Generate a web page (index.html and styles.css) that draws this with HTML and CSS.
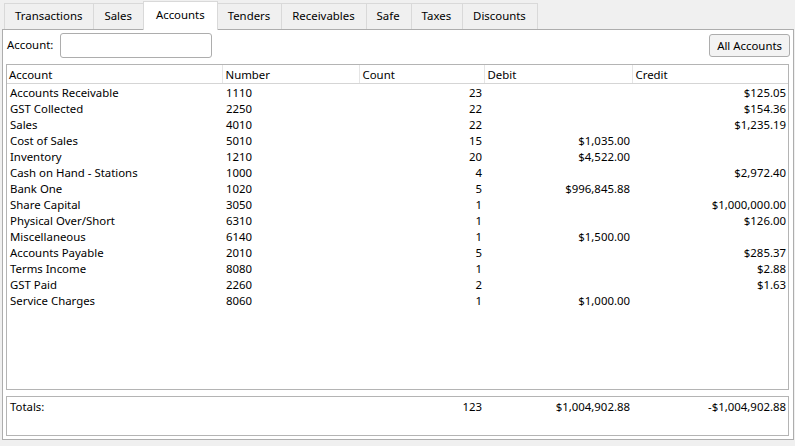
FILE: index.html
```html
<!DOCTYPE html>
<html lang="en">
<head>
<meta charset="UTF-8">
<title>Accounts</title>
<link rel="stylesheet" href="styles.css">
</head>
<body>
	<div class="tabs">
		<div class="tab">Transactions</div>
		<div class="tab">Sales</div>
		<div class="tab active">Accounts</div>
		<div class="tab">Tenders</div>
		<div class="tab">Receivables</div>
		<div class="tab">Safe</div>
		<div class="tab">Taxes</div>
		<div class="tab">Discounts</div>
	</div>

	<div class="panel">
		<div class="toolbar">
			<label class="lbl">Account:</label>
			<div class="field"></div>
			<div class="spacer"></div>
			<div class="btn">All Accounts</div>
		</div>

		<div class="grid">
			<table>
				<colgroup>
					<col class="c1"><col class="c2"><col class="c3"><col class="c4"><col>
				</colgroup>
				<thead>
					<tr><th>Account</th><th>Number</th><th>Count</th><th>Debit</th><th>Credit</th></tr>
				</thead>
				<tbody>
					<tr><td>Accounts Receivable</td><td>1110</td><td class="num">23</td><td class="num"></td><td class="num">$125.05</td></tr>
					<tr><td>GST Collected</td><td>2250</td><td class="num">22</td><td class="num"></td><td class="num">$154.36</td></tr>
					<tr><td>Sales</td><td>4010</td><td class="num">22</td><td class="num"></td><td class="num">$1,235.19</td></tr>
					<tr><td>Cost of Sales</td><td>5010</td><td class="num">15</td><td class="num">$1,035.00</td><td class="num"></td></tr>
					<tr><td>Inventory</td><td>1210</td><td class="num">20</td><td class="num">$4,522.00</td><td class="num"></td></tr>
					<tr><td>Cash on Hand - Stations</td><td>1000</td><td class="num">4</td><td class="num"></td><td class="num">$2,972.40</td></tr>
					<tr><td>Bank One</td><td>1020</td><td class="num">5</td><td class="num">$996,845.88</td><td class="num"></td></tr>
					<tr><td>Share Capital</td><td>3050</td><td class="num">1</td><td class="num"></td><td class="num">$1,000,000.00</td></tr>
					<tr><td>Physical Over/Short</td><td>6310</td><td class="num">1</td><td class="num"></td><td class="num">$126.00</td></tr>
					<tr><td>Miscellaneous</td><td>6140</td><td class="num">1</td><td class="num">$1,500.00</td><td class="num"></td></tr>
					<tr><td>Accounts Payable</td><td>2010</td><td class="num">5</td><td class="num"></td><td class="num">$285.37</td></tr>
					<tr><td>Terms Income</td><td>8080</td><td class="num">1</td><td class="num"></td><td class="num">$2.88</td></tr>
					<tr><td>GST Paid</td><td>2260</td><td class="num">2</td><td class="num"></td><td class="num">$1.63</td></tr>
					<tr><td>Service Charges</td><td>8060</td><td class="num">1</td><td class="num">$1,000.00</td><td class="num"></td></tr>
				</tbody>
			</table>
		</div>

		<div class="totals">
			<table>
				<colgroup>
					<col class="c1"><col class="c2"><col class="c3"><col class="c4"><col>
				</colgroup>
				<tr><td>Totals:</td><td></td><td class="num">123</td><td class="num">$1,004,902.88</td><td class="num">-$1,004,902.88</td></tr>
			</table>
		</div>
	</div>
</body>
</html>
```

FILE: styles.css
```css
body {
	margin: 0;
	background: #f0f0f0;
	font-family: "Noto Sans", "Open Sans", sans-serif;
	font-size: 11.4px;
	color: #000;
	height: 446px;
	overflow: hidden;
}

/* tab strip */
.tabs {
	display: flex;
	align-items: flex-end;
	height: 29px;
	padding-left: 4px;
}
.tab {
	height: 25px;
	line-height: 24px;
	padding: 0 11px 0 10px;
	min-width: 22px;
	text-align: center;
	border: 1px solid #d9d9d9;
	border-bottom: none;
	margin-right: -1px;
	background: #f0f0f0;
}
.tab.active {
	height: 28px;
	line-height: 25px;
	padding: 0 12px;
	margin: 0 -1px -1px 0;
	background: #fff;
	position: relative;
	z-index: 2;
}

/* main panel */
.panel {
	margin: 0 1px 0 2px;
	height: 411px;
	border: 1px solid #adadad;
	background: #fff;
	box-sizing: border-box;
	padding: 3px 4px 3px 3px;
	display: flex;
	flex-direction: column;
}
.toolbar {
	display: flex;
	align-items: flex-start;
	height: 24px;
	flex-shrink: 0;
	gap: 4px;
	margin-left: 1px;
}
.lbl {
	line-height: 23px;
	margin-right: 3px;
}
.field {
	width: 150px;
	height: 23px;
	border: 1px solid #adadad;
	border-radius: 3px;
	background: #fff;
}
.spacer {
	flex: 1;
}
.btn {
	height: 23px;
	line-height: 22px;
	padding: 0 7px;
	border: 1px solid #adadad;
	border-radius: 3px;
	background: #f3f3f3;
	margin-top: 1px;
	margin-right: -1px;
	box-sizing: border-box;
}

.grid {
	margin-top: 7px;
	height: 326px;
	flex-shrink: 0;
	border: 1px solid #b4b4b4;
	box-sizing: border-box;
}
table {
	width: 100%;
	border-collapse: collapse;
	table-layout: fixed;
}
.c1 { width: 215px; }
.c2 { width: 137px; }
.c3 { width: 125px; }
.c4 { width: 148px; }

th {
	font-weight: normal;
	text-align: left;
	height: 18px;
	padding: 0 3px;
	border-left: 1px solid #e5e5e5;
	border-bottom: 1px solid #d5d5d5;
	background: #fff;
}
th:first-child {
	border-left: none;
	padding-left: 2px;
}
td {
	height: 16px;
	padding: 0 2px 0 4px;
	line-height: 15px;
	white-space: nowrap;
}
td:first-child {
	padding-left: 3px;
}
.num {
	text-align: right;
}

.totals {
	margin-top: 6px;
	height: 40px;
	flex-shrink: 0;
	border: 1px solid #b4b4b4;
	box-sizing: border-box;
	padding-top: 1px;
}
```
